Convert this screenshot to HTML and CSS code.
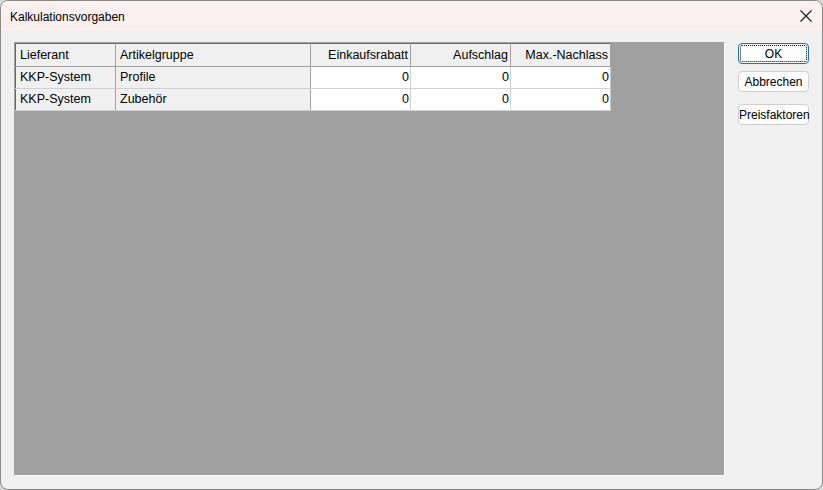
FILE: index.html
```html
<!DOCTYPE html>
<html>
<head>
<meta charset="utf-8">
<link rel="stylesheet" href="styles.css">
</head>
<body>
<div class="window">
  <div class="titlebar">
    <span class="title">Kalkulationsvorgaben</span>
    <svg class="close" width="12" height="12" viewBox="0 0 12 12"><path d="M0.5 0.5 L11.5 11.5 M11.5 0.5 L0.5 11.5" stroke="#1a1a1a" stroke-width="1.1" fill="none"/></svg>
  </div>
  <div class="content">
    <div class="gridframe">
      <table class="grid">
        <tr class="head">
          <td class="c1">Lieferant</td>
          <td class="c2">Artikelgruppe</td>
          <td class="num c3">Einkaufsrabatt</td>
          <td class="num c3">Aufschlag</td>
          <td class="num c3 last">Max.-Nachlass</td>
        </tr>
        <tr>
          <td class="fix">KKP-System</td>
          <td class="fix">Profile</td>
          <td class="val">0</td>
          <td class="val">0</td>
          <td class="val last">0</td>
        </tr>
        <tr>
          <td class="fix">KKP-System</td>
          <td class="fix">Zubehör</td>
          <td class="val">0</td>
          <td class="val">0</td>
          <td class="val last">0</td>
        </tr>
      </table>
    </div>
    <div class="buttons">
      <button class="btn default">OK</button>
      <button class="btn">Abbrechen</button>
      <button class="btn gap">Preisfaktoren</button>
    </div>
  </div>
</div>
</body>
</html>
```
FILE: styles.css
```css
html, body {
  margin: 0;
  padding: 0;
  background: #d8d8d8;
}
body {
  width: 823px;
  height: 490px;
  overflow: hidden;
  font-family: "Liberation Sans", Arial, sans-serif;
}
.window {
  box-sizing: border-box;
  width: 823px;
  height: 490px;
  border: 1px solid #8a8a8a;
  border-radius: 8px;
  background: #f0f0f0;
  overflow: hidden;
  display: flex;
  flex-direction: column;
}
.titlebar {
  height: 30px;
  flex: none;
  background: #f9f0ef;
  display: flex;
  align-items: center;
  justify-content: space-between;
  padding: 0 10px 0 9px;
}
.title {
  font-family: "Liberation Sans", Arial, sans-serif;
  font-size: 12px;
  color: #000;
  margin-top: 1px;
}
.close {
  display: block;
}
.content {
  flex: 1;
  display: flex;
  padding: 11px 0 0 13px;
}
.gridframe {
  box-sizing: border-box;
  flex: none;
  width: 711px;
  height: 434px;
  border-style: solid;
  border-width: 1px;
  border-color: #a0a0a0 #ffffff #ffffff #a0a0a0;
  background: #a0a0a0;
}
.grid {
  border-collapse: collapse;
  border-left: 1px solid #696969;
  border-top: 1px solid #696969;
  font-size: 12.5px;
  color: #000;
}
.grid td {
  height: 22px;
  padding: 0 4px 0 4px;
  box-sizing: border-box;
  white-space: nowrap;
  line-height: 21px;
}
.head td {
  background: #f0f0f0;
  border-right: 1px solid #a0a0a0;
  border-bottom: 1px solid #a0a0a0;
  height: 23px;
  padding-top: 1px;
}
.c1 { width: 100px; }
.c2 { width: 195px; }
.c3 { width: 100px; }
.num { text-align: right; }
.fix {
  background: #f0f0f0;
  border-right: 1px solid #a0a0a0;
  border-bottom: 1px solid #d0d0d0;
}
.val {
  background: #ffffff;
  text-align: right;
  border-right: 1px solid #d0d0d0;
  border-bottom: 1px solid #d0d0d0;
  padding-right: 1px !important;
}
.head .num { padding-right: 2px; }
.val.last { border-right: 1px solid #c8c8c8; }
.buttons {
  display: flex;
  flex-direction: column;
  margin-left: 13px;
  padding-top: 1px;
  width: 71px;
}
.btn {
  box-sizing: border-box;
  width: 71px;
  height: 21px;
  margin: 0 0 7px 0;
  padding: 0;
  background: #fdfdfd;
  border: 1px solid #d0d0d0;
  border-radius: 4px;
  font-family: "Liberation Sans", Arial, sans-serif;
  font-size: 12px;
  color: #000;
}
.btn.default {
  border: 1px solid #1a6fc7;
  outline: 1px dotted #000;
  outline-offset: -3px;
}
.btn.gap { margin-top: 5px; }
```
